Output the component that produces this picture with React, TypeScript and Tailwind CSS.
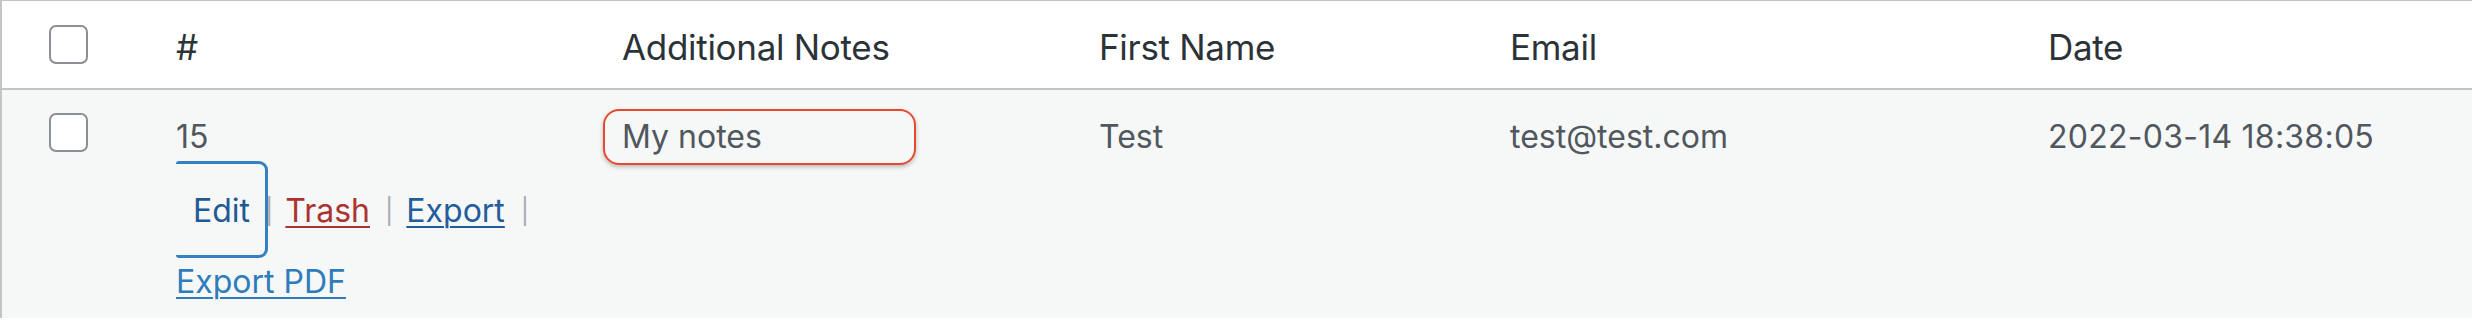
import React from "react";

// Single-row entries list, WordPress admin style
const font = { fontFamily: "Inter, 'Noto Sans', sans-serif" };

function Checkbox() {
  return (
    <span className="block h-[39px] w-[39px] rounded-[7px] border-2 border-[#8c8f94] bg-white" />
  );
}

const cols = "grid grid-cols-[174px_427px_496px_411px_538px_1fr]";

export default function App() {
  return (
    <div className="min-h-[320px] w-full bg-white" style={font}>
      <div className="border-l-2 border-t border-[#c3c4c7]">
        {/* header */}
        <div className={`${cols} h-[89px] items-center border-b-2 border-[#c3c4c7] bg-white pt-[5px] text-[35px] tracking-[-0.3px] text-[#2c3338]`}>
          <div className="-mt-[5px] pl-[47px]">
            <Checkbox />
          </div>
          <div>#</div>
          <div className="pl-[19px]">Additional Notes</div>
          <div>First Name</div>
          <div>Email</div>
          <div>Date</div>
        </div>

        {/* entry row */}
        <div className={`${cols} h-[228px] items-start bg-[#f6f7f7] text-[32px] leading-[40px] text-[#50575e]`}>
          <div className="pl-[47px] pt-[23px]">
            <Checkbox />
          </div>
          <div className="pt-[27px]">
            <div>15</div>
            <div className="mt-[4px]">
              <div className="flex items-center">
                <a className="flex h-[97px] w-[92px] items-center rounded-l-[3px] rounded-r-[9px] border-y-[3px] border-r-[3px] border-[#3480c0] pl-[17px] pt-[3px] text-[#1f5a96]">
                  Edit
                </a>
                <span className="-ml-[3px] pt-[3px] text-[25px] text-[#a7aaad]">|</span>
                <a className="ml-[12px] pt-[3px] text-[#ab3330] underline decoration-2 underline-offset-[4px]">Trash</a>
                <span className="ml-[15px] pt-[3px] text-[25px] text-[#a7aaad]">|</span>
                <a className="ml-[13px] pt-[3px] text-[#235d9b] underline decoration-2 underline-offset-[4px]">Export</a>
                <span className="ml-[16px] pt-[3px] text-[25px] text-[#a7aaad]">|</span>
              </div>
              <a className="mt-[2px] block w-fit leading-[43px] text-[#2f7cbd] underline decoration-2 underline-offset-[4px]">
                Export PDF
              </a>
            </div>
          </div>
          <div className="pt-[19px]">
            <div className="flex h-[56px] w-[313px] items-center rounded-[16px] border-2 border-[#e54a2e] pl-[17px] shadow-[0_2px_4px_rgba(0,0,0,0.25)]">
              My notes
            </div>
          </div>
          <div className="pt-[27px]">Test</div>
          <div className="pt-[27px]">test@test.com</div>
          <div className="pt-[27px] tracking-[0.25px]">2022-03-14 18:38:05</div>
        </div>
      </div>
    </div>
  );
}
